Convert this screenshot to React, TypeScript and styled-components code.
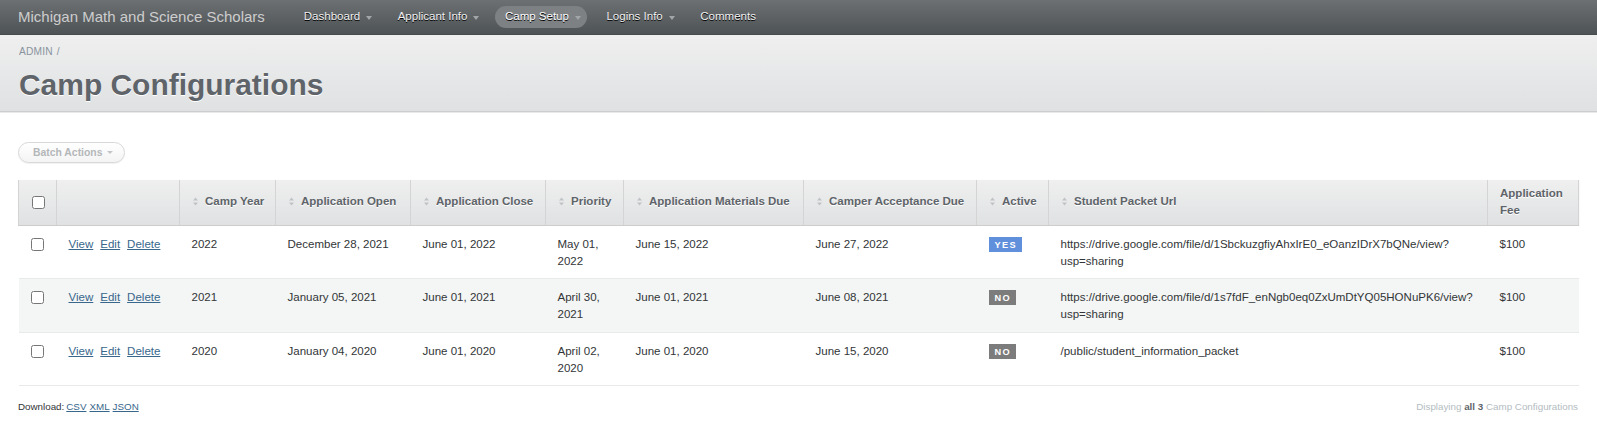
import React from "react";
import styled, { createGlobalStyle } from "styled-components";

const GlobalStyle = createGlobalStyle`
  html, body { margin: 0; padding: 0; background: #fff; }
  body {
    font-family: "Liberation Sans", Arial, Helvetica, sans-serif;
    font-size: 11.52px;
    line-height: 150%;
    color: #323537;
  }
  * { box-sizing: border-box; }
`;

const Header = styled.header`
  height: 35px;
  display: flex;
  align-items: center;
  padding: 0 18px;
  background: linear-gradient(180deg, #6c7073 0%, #4e5356 100%);
  border-bottom: 1px solid #464b4e;
`;

const SiteTitle = styled.h1`
  margin: 0 29px 0 0;
  font-size: 15px;
  font-weight: normal;
  color: #cdcdcd;
  line-height: 20px;
  white-space: nowrap;
`;

const Tabs = styled.ul`
  list-style: none;
  margin: 0;
  padding: 0;
  display: flex;
  gap: 9.5px;
`;

const Tab = styled.li<{ $current?: boolean; $hasMenu?: boolean }>`
  display: flex;
  align-items: center;
  height: 22px;
  padding: 0 ${(p) => (p.$hasMenu ? "6px" : "10px")} 0 10px;
  border-radius: 11px;
  background: ${(p) => (p.$current ? "#7d8184" : "transparent")};
  color: ${(p) => (p.$current ? "#fff" : "#f2f2f2")};
  text-shadow: #000 0 1px 0;
  font-size: 11.52px;
  white-space: nowrap;
`;

const Caret = styled.span`
  display: inline-block;
  width: 0;
  height: 0;
  margin-left: 6px;
  border-left: 3.5px solid transparent;
  border-right: 3.5px solid transparent;
  border-top: 4px solid #a2a6a9;
  margin-top: 1px;
`;

const TitleBar = styled.div`
  padding: 9px 19px 8px 19px;
  background: linear-gradient(180deg, #efefef 0%, #dfe1e2 100%);
  border-bottom: 1px solid #cdcdcd;
  box-shadow: 0 1px 0 #e9e9e9;
`;

const Breadcrumb = styled.div`
  font-size: 10.2px;
  line-height: 15px;
  color: #8a949e;
  text-transform: uppercase;
  letter-spacing: 0.2px;
`;

const Sep = styled.span`
  margin: 0 4px;
`;

const PageTitle = styled.h2`
  margin: 8px 0 0 0;
  font-size: 29.95px;
  line-height: 36px;
  font-weight: bold;
  color: #5e6469;
  text-shadow: #fff 0 1px 0;
`;

const Content = styled.main`
  padding: 30px 19px 20px 18px;
`;

const BatchButton = styled.button`
  font-family: inherit;
  display: inline-flex;
  align-items: center;
  height: 21px;
  padding: 0 11px 0 14px;
  border-radius: 11px;
  border: 1px solid #d8d8d8;
  background: linear-gradient(180deg, #ffffff 0%, #f4f4f4 100%);
  color: #b4b7b9;
  font-size: 10.4px;
  font-weight: bold;
  box-shadow: 0 1px 1px rgba(0, 0, 0, 0.06);
`;

const SmallCaret = styled.span`
  display: inline-block;
  width: 0;
  height: 0;
  margin-left: 5px;
  border-left: 3px solid transparent;
  border-right: 3px solid transparent;
  border-top: 3px solid #c3c6c8;
`;

const Table = styled.table`
  margin-top: 17px;
  width: 1560px;
  table-layout: fixed;
  border-collapse: collapse;
  border-spacing: 0;
`;

const Th = styled.th`
  text-align: left;
  vertical-align: middle;
  padding: 5px 12px 5px 12px;
  background: linear-gradient(180deg, #efefef 0%, #dfe1e2 100%);
  border-right: 1px solid #d4d4d4;
  border-left: 1px solid #f2f2f2;
  border-bottom: 1px solid #cdcdcd;
  color: #5e6469;
  font-weight: bold;
  font-size: 11.52px;
  line-height: 17.3px;
  text-shadow: #fff 0 1px 0;
  height: 44px;
  &:first-child { border-left: 1px solid #d4d4d4; }
`;

const HeadRow = styled.tr`
  box-shadow: 0 1px 2px rgba(0, 0, 0, 0.08);
`;

const Row = styled.tr<{ $alt?: boolean }>`
  background: ${(p) => (p.$alt ? "#f4f5f5" : "#fff")};
  border-bottom: 1px solid #e8e9ea;
`;

const Td = styled.td`
  vertical-align: top;
  padding: 10px 12px 8px 12px;
  line-height: 17.28px;
  font-size: 11.52px;
  color: #323537;
  word-wrap: break-word;
`;

const CheckCell = styled(Td)`
  padding: 9px 0 8px 8px;
`;

const CheckHead = styled(Th)`
  padding: 5px 0 5px 9px;
`;

const Check = styled.input.attrs({ type: "checkbox" })`
  margin: 3px 3px 3px 4px;
  vertical-align: middle;
`;

const SortLabel = styled.span`
  display: inline-flex;
  align-items: center;
  gap: 6px;
  white-space: nowrap;
`;

const Link = styled.a`
  color: #38678b;
  text-decoration: underline;
  margin-right: 7px;
  cursor: pointer;
`;

const Status = styled.span<{ $yes?: boolean }>`
  display: inline-block;
  background: ${(p) => (p.$yes ? "#6090db" : "#7c7c7c")};
  color: #fff;
  text-transform: uppercase;
  letter-spacing: 0.15em;
  padding: 3px 5px 2px 6px;
  font-size: 9.2px;
  line-height: 10px;
  font-weight: bold;
`;

const Footer = styled.div`
  display: flex;
  justify-content: space-between;
  align-items: center;
  margin-top: 13px;
  font-size: 9.8px;
  line-height: 15px;
`;

const Downloads = styled.div`
  color: #323537;
  a {
    color: #38678b;
    text-decoration: underline;
    margin-left: 3px;
  }
  a:first-of-type { margin-left: 2px; }
`;

const Info = styled.div`
  color: #b3bcc1;
  b { color: #5e6469; }
`;

const SortIcon = () => (
  <svg width="7" height="9" viewBox="0 0 7 9" aria-hidden="true">
    <path d="M3.5 0.5 L6 3.5 L1 3.5 Z" fill="#bfc3c6" />
    <path d="M3.5 8.5 L6 5.5 L1 5.5 Z" fill="#bfc3c6" />
  </svg>
);

const widths = [38, 123, 96, 135, 135, 78, 180, 173, 72, 439, 91];

const columns: { label: string; sortable: boolean }[] = [
  { label: "Camp Year", sortable: true },
  { label: "Application Open", sortable: true },
  { label: "Application Close", sortable: true },
  { label: "Priority", sortable: true },
  { label: "Application Materials Due", sortable: true },
  { label: "Camper Acceptance Due", sortable: true },
  { label: "Active", sortable: true },
  { label: "Student Packet Url", sortable: true },
  { label: "Application Fee", sortable: false },
];

const rows = [
  {
    year: "2022",
    open: "December 28, 2021",
    close: "June 01, 2022",
    priority: "May 01, 2022",
    materials: "June 15, 2022",
    acceptance: "June 27, 2022",
    active: true,
    url: "https://drive.google.com/file/d/1SbckuzgfiyAhxIrE0_eOanzIDrX7bQNe/view?usp=sharing",
    fee: "$100",
  },
  {
    year: "2021",
    open: "January 05, 2021",
    close: "June 01, 2021",
    priority: "April 30, 2021",
    materials: "June 01, 2021",
    acceptance: "June 08, 2021",
    active: false,
    url: "https://drive.google.com/file/d/1s7fdF_enNgb0eq0ZxUmDtYQ05HONuPK6/view?usp=sharing",
    fee: "$100",
  },
  {
    year: "2020",
    open: "January 04, 2020",
    close: "June 01, 2020",
    priority: "April 02, 2020",
    materials: "June 01, 2020",
    acceptance: "June 15, 2020",
    active: false,
    url: "/public/student_information_packet",
    fee: "$100",
  },
];

const navTabs = [
  { label: "Dashboard", menu: true },
  { label: "Applicant Info", menu: true },
  { label: "Camp Setup", menu: true, current: true },
  { label: "Logins Info", menu: true },
  { label: "Comments", menu: false },
];

export default function App() {
  return (
    <>
      <GlobalStyle />
      <Header>
        <SiteTitle>Michigan Math and Science Scholars</SiteTitle>
        <Tabs>
          {navTabs.map((t) => (
            <Tab key={t.label} $current={t.current} $hasMenu={t.menu}>
              {t.label}
              {t.menu && <Caret />}
            </Tab>
          ))}
        </Tabs>
      </Header>
      <TitleBar>
        <Breadcrumb>
          Admin<Sep>/</Sep>
        </Breadcrumb>
        <PageTitle>Camp Configurations</PageTitle>
      </TitleBar>
      <Content>
        <BatchButton type="button">
          Batch Actions
          <SmallCaret />
        </BatchButton>
        <Table>
          <colgroup>
            {widths.map((w, i) => (
              <col key={i} style={{ width: w }} />
            ))}
          </colgroup>
          <thead>
            <HeadRow>
              <CheckHead>
                <Check />
              </CheckHead>
              <Th />
              {columns.map((c) => (
                <Th key={c.label}>
                  {c.sortable ? (
                    <SortLabel>
                      <SortIcon />
                      {c.label}
                    </SortLabel>
                  ) : (
                    c.label
                  )}
                </Th>
              ))}
            </HeadRow>
          </thead>
          <tbody>
            {rows.map((r, i) => (
              <Row key={r.year} $alt={i % 2 === 1}>
                <CheckCell>
                  <Check />
                </CheckCell>
                <Td>
                  <Link>View</Link>
                  <Link>Edit</Link>
                  <Link>Delete</Link>
                </Td>
                <Td>{r.year}</Td>
                <Td>{r.open}</Td>
                <Td>{r.close}</Td>
                <Td>{r.priority}</Td>
                <Td>{r.materials}</Td>
                <Td>{r.acceptance}</Td>
                <Td>
                  <Status $yes={r.active}>{r.active ? "Yes" : "No"}</Status>
                </Td>
                <Td>{r.url}</Td>
                <Td>{r.fee}</Td>
              </Row>
            ))}
          </tbody>
        </Table>
        <Footer>
          <Downloads>
            Download:<a>CSV</a>
            <a>XML</a>
            <a>JSON</a>
          </Downloads>
          <Info>
            Displaying <b>all 3</b> Camp Configurations
          </Info>
        </Footer>
      </Content>
    </>
  );
}
